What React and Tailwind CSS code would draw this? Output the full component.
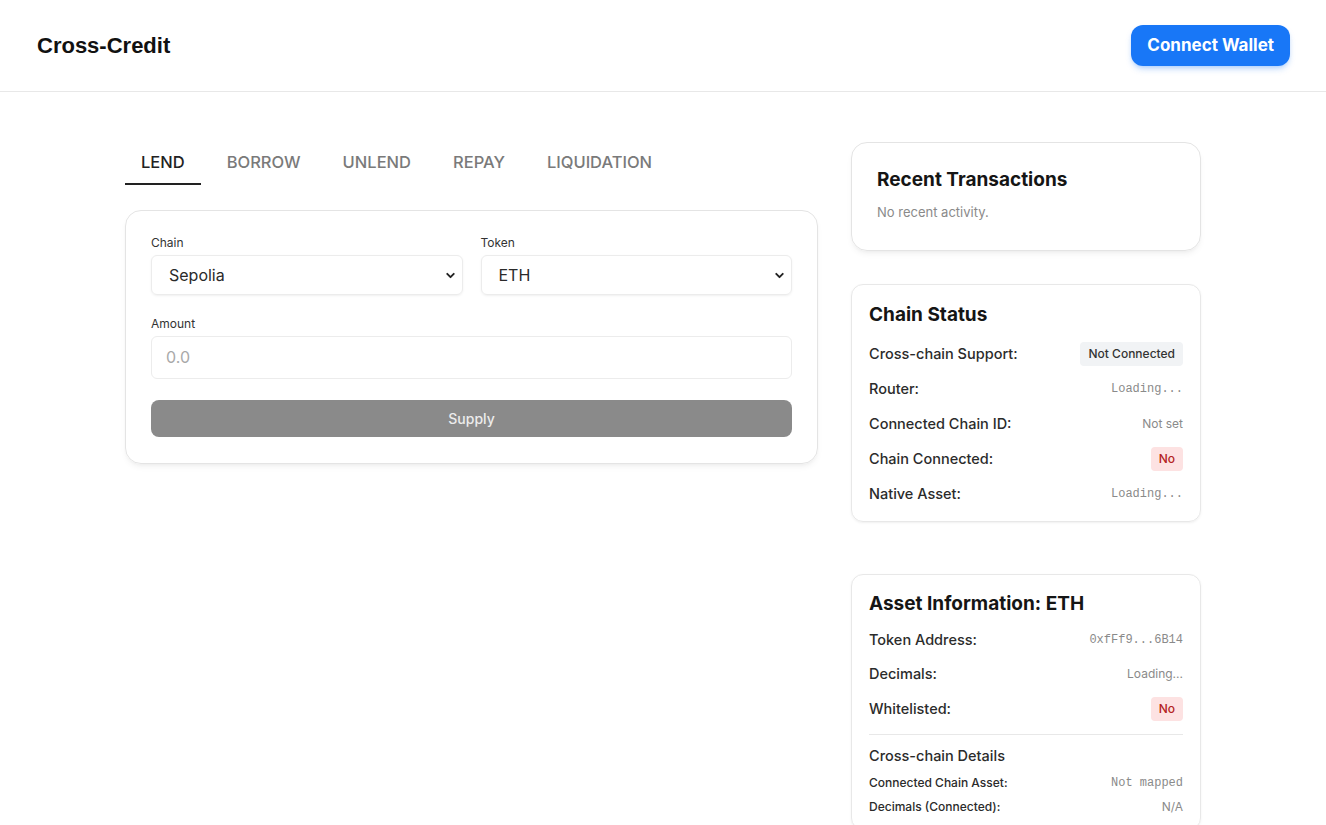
import { ChevronDown } from 'lucide-react';

const tabs = ['LEND', 'BORROW', 'UNLEND', 'REPAY', 'LIQUIDATION'];

function Badge({ tone, children }) {
  const cls = tone === 'red' ? 'bg-[#fde2e2] text-[#b42323]' : 'bg-[#f1f3f5] text-[#333]';
  return <span className={`${cls} text-[12px] font-medium px-2 py-[3px] rounded`}>{children}</span>;
}

function Row({ label, children, small, tall }) {
  return (
    <div className={`flex items-center justify-between ${small ? 'h-6' : tall ? 'h-[35px]' : 'h-[34px]'}`}>
      <span className={`${small ? 'text-[12px]' : 'text-[14.5px]'} font-medium text-[#2b2b2b]`}>{label}</span>
      {children}
    </div>
  );
}

const mono = 'font-["Liberation_Mono",monospace] text-[12px] text-[#8a8a8a]';
const muted = 'text-[12px] text-[#8a8a8a]';

export default function App() {
  return (
    <div className="min-h-screen bg-white font-['Inter',sans-serif] text-[#1a1a1a]">
      {/* Header */}
      <header className="h-[92px] border-b border-[#e8e8e8] flex items-center justify-between pl-[37px] pr-[36px]">
        <h1 className="font-['Liberation_Sans',Arial,sans-serif] font-bold text-[22px] text-[#111]">Cross-Credit</h1>
        <button className="h-[41px] px-4 pt-px rounded-xl bg-[#1877f7] text-white font-bold text-[17px] shadow-md shadow-[#1877f7]/25">
          Connect Wallet
        </button>
      </header>

      <main className="flex justify-center gap-[33px] pt-[50px]">
        {/* Left column */}
        <div className="w-[693px]">
          <div className="flex gap-2.5">
            {tabs.map((t, i) => (
              <button
                key={t}
                className={`px-4 pt-[8px] pb-[8px] text-[16.5px] font-medium border-b-2 ${i === 0 ? 'border-[#222] text-[#222]' : 'border-transparent text-[#7a7a7a]'}`}
              >
                {t}
              </button>
            ))}
          </div>

          <div className="mt-[25px] border border-[#e4e4e4] rounded-2xl shadow-md shadow-black/5 px-[25px] pt-[23px] pb-[26px]">
            <div className="grid grid-cols-2 gap-[18px]">
              <div>
                <label className="block text-[12px] text-[#333] mb-[3px]">Chain</label>
                <div className="relative">
                  <div className="h-10 border border-[#ececec] rounded-md shadow-sm shadow-black/5 flex items-center pl-[17px] text-[16px] text-[#2a2a2a]">Sepolia</div>
                  <ChevronDown size={13} strokeWidth={3.5} className="absolute right-[6px] top-[14px] text-[#222]" />
                </div>
              </div>
              <div>
                <label className="block text-[12px] text-[#333] mb-[3px]">Token</label>
                <div className="relative">
                  <div className="h-10 border border-[#ececec] rounded-md shadow-sm shadow-black/5 flex items-center pl-[17px] text-[16px] text-[#2a2a2a]">ETH</div>
                  <ChevronDown size={13} strokeWidth={3.5} className="absolute right-[6px] top-[14px] text-[#222]" />
                </div>
              </div>
            </div>

            <label className="block text-[12px] text-[#333] mt-[20px] mb-[3px]">Amount</label>
            <input
              placeholder="0.0"
              className="w-full h-[43px] border border-[#ececec] rounded-md px-[14px] text-[16px] placeholder:text-[#a9a9a9] outline-none"
            />

            <button className="mt-[21px] w-full h-[37px] rounded-lg bg-[#8a8a8a] text-[#ececec] text-[14px] font-medium">
              Supply
            </button>
          </div>
        </div>

        {/* Right column */}
        <div className="w-[350px]">
          <div className="border border-[#e4e4e4] rounded-2xl shadow-md shadow-black/5 pl-[25px] pr-[26px] pt-[23px] pb-[28px]">
            <h2 className="text-[19px] font-bold text-[#151515]">Recent Transactions</h2>
            <p className="text-[13px] text-[#8a8a8a] mt-[8px]">No recent activity.</p>
          </div>

          <div className="mt-[33px] border border-[#e8e8e8] rounded-xl shadow-sm shadow-black/5 px-[17px] pt-[16px] pb-[9px]">
            <h2 className="text-[19px] font-bold text-[#151515] mb-[7px]">Chain Status</h2>
            <Row tall label="Cross-chain Support:"><Badge>Not Connected</Badge></Row>
            <Row tall label="Router:"><span className={mono}>Loading...</span></Row>
            <Row tall label="Connected Chain ID:"><span className={muted}>Not set</span></Row>
            <Row tall label="Chain Connected:"><Badge tone="red">No</Badge></Row>
            <Row tall label="Native Asset:"><span className={mono}>Loading...</span></Row>
          </div>

          <div className="mt-[52px] border border-[#e8e8e8] rounded-xl shadow-sm shadow-black/5 px-[17px] pt-[15px] pb-[10px]">
            <h2 className="text-[19px] font-bold text-[#151515] mb-[5px]">Asset Information: ETH</h2>
            <Row label="Token Address:"><span className={mono}>0xfFf9...6B14</span></Row>
            <Row label="Decimals:"><span className={muted}>Loading...</span></Row>
            <Row tall label="Whitelisted:"><Badge tone="red">No</Badge></Row>
            <div className="border-t border-[#e8e8e8] mt-[8px] pt-[10px]">
              <h3 className="text-[14.5px] font-medium text-[#2b2b2b] mb-[4px]">Cross-chain Details</h3>
              <Row small label="Connected Chain Asset:"><span className={mono}>Not mapped</span></Row>
              <Row small label="Decimals (Connected):"><span className={muted}>N/A</span></Row>
            </div>
          </div>
        </div>
      </main>
    </div>
  );
}
